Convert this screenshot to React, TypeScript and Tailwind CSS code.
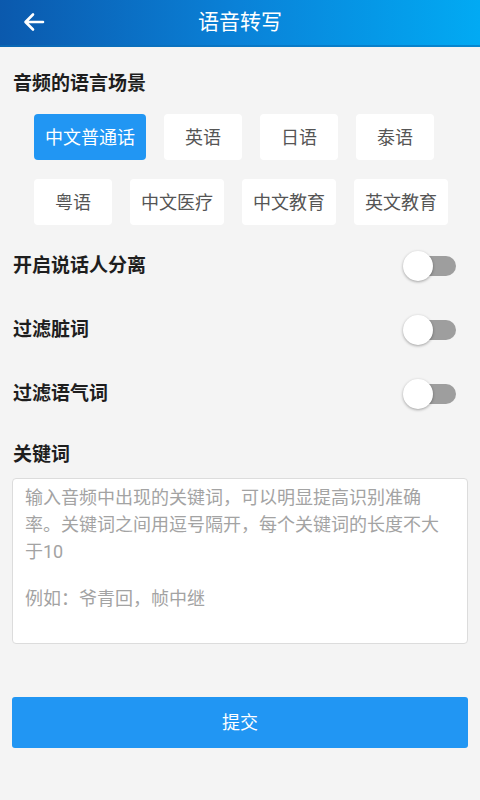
import React, { useState } from 'react';

const font = { fontFamily: 'Roboto, "Noto Sans CJK SC", "Noto Sans", sans-serif' };

const scenes = ['中文普通话', '英语', '日语', '泰语', '粤语', '中文医疗', '中文教育', '英文教育'];

// Switch (off state, android style)
const Toggle: React.FC<{ on: boolean; onClick: () => void }> = ({ on, onClick }) => (
  <button onClick={onClick} className="relative w-[46px] h-[20px] mr-[24px]">
    <span className={`absolute inset-0 rounded-full ${on ? 'bg-[#90caf9]' : 'bg-[#9e9e9e]'}`} />
    <span
      className={`absolute top-[-5px] w-[30px] h-[30px] rounded-full shadow-[0_1px_3px_rgba(0,0,0,0.35)] ${
        on ? 'left-[23px] bg-[#2196f3]' : 'left-[-7px] bg-white'
      }`}
    />
  </button>
);

export default function App() {
  const [scene, setScene] = useState(0);
  const [toggles, setToggles] = useState([false, false, false]);
  const labels = ['开启说话人分离', '过滤脏词', '过滤语气词'];

  return (
    <div className="w-[480px] h-[800px] bg-[#f4f4f4] flex flex-col" style={font}>
      {/* Header */}
      <div className="h-[47px] shrink-0 bg-gradient-to-r from-[#0b59ad] via-[#0a82d8] to-[#02aaf3] border-b-2 border-[#0a6fb8]/60 flex items-center relative">
        <svg
          className="absolute left-[23px] top-[12px]"
          width="22"
          height="20"
          viewBox="0 0 22 20"
          fill="none"
          stroke="white"
          strokeWidth="2.6"
          strokeLinecap="round"
          strokeLinejoin="round"
        >
          <path d="M20 10H3M10 2.5 2.5 10 10 17.5" />
        </svg>
        <h1 className="w-full text-center text-white text-[21px] leading-none">语音转写</h1>
      </div>

      {/* Scene */}
      <h2 className="mt-[25px] ml-[13px] text-[19px] leading-[24px] font-bold text-[#1e1e1e]">音频的语言场景</h2>
      <div className="mt-[18px] pl-[34px] pr-[20px] flex flex-wrap gap-x-[18px] gap-y-[19px]">
        {scenes.map((s, i) => (
          <button
            key={s}
            onClick={() => setScene(i)}
            className={`h-[46px] min-w-[78px] px-[11px] rounded-[4px] text-[18px] ${
              scene === i ? 'bg-[#2196f3] text-white' : 'bg-white text-[#555]'
            }`}
          >
            {s}
          </button>
        ))}
      </div>

      {/* Switches */}
      <div className="mt-[9px]">
        {labels.map((l, i) => (
          <div key={l} className="h-[64px] flex items-center justify-between pl-[13px]">
            <span className="text-[19px] font-bold text-[#1e1e1e]">{l}</span>
            <Toggle
              on={toggles[i]}
              onClick={() => setToggles(toggles.map((t, j) => (j === i ? !t : t)))}
            />
          </div>
        ))}
      </div>

      {/* Keywords */}
      <h2 className="mt-[17px] ml-[13px] text-[19px] leading-[24px] font-bold text-[#1e1e1e]">关键词</h2>
      <div className="mt-[11px] mx-[12px] h-[166px] bg-white border border-[#dcdcdc] rounded-[4px] px-[12px] pt-[5px] text-[18px] leading-[27px] text-[#a3a3a3]">
        <p>输入音频中出现的关键词，可以明显提高识别准确率。关键词之间用逗号隔开，每个关键词的长度不大于10</p>
        <p className="mt-[20px]">例如：爷青回，帧中继</p>
      </div>

      {/* Submit */}
      <button className="mt-[53px] mx-[12px] h-[51px] rounded-[3px] bg-[#2196f3] text-white text-[18px]">
        提交
      </button>
    </div>
  );
}
